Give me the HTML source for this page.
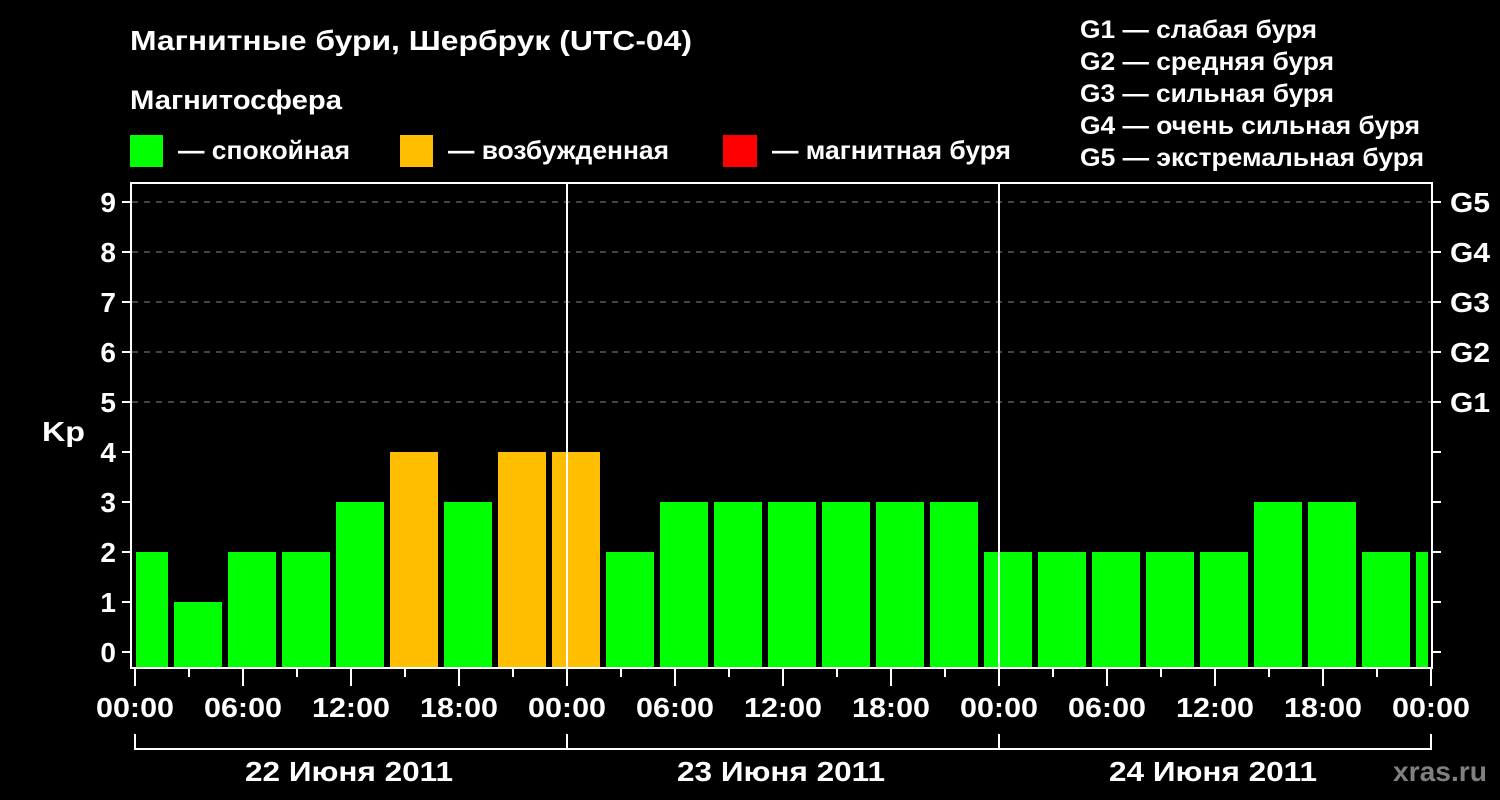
<!DOCTYPE html>
<html><head><meta charset="utf-8"><style>
html,body{margin:0;padding:0;background:#000;}
svg{display:block;}
text{font-family:"Liberation Sans",sans-serif;font-weight:bold;fill:#fff;}
</style></head><body>
<svg width="1500" height="800" viewBox="0 0 1500 800" xmlns="http://www.w3.org/2000/svg">
<rect width="1500" height="800" fill="#000"/>
<text x="130" y="50" font-size="28" textLength="562" lengthAdjust="spacingAndGlyphs">Магнитные бури, Шербрук (UTC-04)</text>
<text x="130" y="109" font-size="27" textLength="212" lengthAdjust="spacingAndGlyphs">Магнитосфера</text>
<rect x="130" y="135" width="33" height="32" fill="#00ff00"/>
<text x="178" y="159" font-size="26" textLength="172" lengthAdjust="spacingAndGlyphs">— спокойная</text>
<rect x="400" y="135" width="33" height="32" fill="#ffbf00"/>
<text x="448" y="159" font-size="26" textLength="221" lengthAdjust="spacingAndGlyphs">— возбужденная</text>
<rect x="723" y="135" width="34" height="32" fill="#ff0000"/>
<text x="772" y="159" font-size="26" textLength="239" lengthAdjust="spacingAndGlyphs">— магнитная буря</text>
<g font-size="25">
<text x="1080" y="38" textLength="237" lengthAdjust="spacingAndGlyphs">G1 — слабая буря</text>
<text x="1080" y="70" textLength="254" lengthAdjust="spacingAndGlyphs">G2 — средняя буря</text>
<text x="1080" y="102" textLength="254" lengthAdjust="spacingAndGlyphs">G3 — сильная буря</text>
<text x="1080" y="134" textLength="340" lengthAdjust="spacingAndGlyphs">G4 — очень сильная буря</text>
<text x="1080" y="166" textLength="344" lengthAdjust="spacingAndGlyphs">G5 — экстремальная буря</text>
</g>
<g stroke="#888" stroke-width="1" stroke-dasharray="6,6">
<line x1="132" y1="202" x2="1432" y2="202"/>
<line x1="132" y1="252" x2="1432" y2="252"/>
<line x1="132" y1="302" x2="1432" y2="302"/>
<line x1="132" y1="352" x2="1432" y2="352"/>
<line x1="132" y1="402" x2="1432" y2="402"/>
</g>
<g fill="#00ff00">
<rect x="136" y="552" width="32" height="116"/>
<rect x="174" y="602" width="48" height="66"/>
<rect x="228" y="552" width="48" height="116"/>
<rect x="282" y="552" width="48" height="116"/>
<rect x="336" y="502" width="48" height="166"/>
<rect x="444" y="502" width="48" height="166"/>
<rect x="606" y="552" width="48" height="116"/>
<rect x="660" y="502" width="48" height="166"/>
<rect x="714" y="502" width="48" height="166"/>
<rect x="768" y="502" width="48" height="166"/>
<rect x="822" y="502" width="48" height="166"/>
<rect x="876" y="502" width="48" height="166"/>
<rect x="930" y="502" width="48" height="166"/>
<rect x="984" y="552" width="48" height="116"/>
<rect x="1038" y="552" width="48" height="116"/>
<rect x="1092" y="552" width="48" height="116"/>
<rect x="1146" y="552" width="48" height="116"/>
<rect x="1200" y="552" width="48" height="116"/>
<rect x="1254" y="502" width="48" height="166"/>
<rect x="1308" y="502" width="48" height="166"/>
<rect x="1362" y="552" width="48" height="116"/>
<rect x="1416" y="552" width="12" height="116"/>
</g>
<g fill="#ffbf00">
<rect x="390" y="452" width="48" height="216"/>
<rect x="498" y="452" width="48" height="216"/>
<rect x="552" y="452" width="48" height="216"/>
</g>
<g stroke="#fff" stroke-width="2" fill="none">
<path d="M131 183 H1432 V668 H131 Z"/>
<line x1="567" y1="183" x2="567" y2="668"/>
<line x1="999" y1="183" x2="999" y2="668"/>
<path d="M122 202H131M122 252H131M122 302H131M122 352H131M122 402H131M122 452H131M122 502H131M122 552H131M122 602H131M122 652H131"/>
<path d="M1432 202H1441M1432 252H1441M1432 302H1441M1432 352H1441M1432 402H1441M1432 452H1441M1432 502H1441M1432 552H1441M1432 602H1441M1432 652H1441"/>
<path d="M135 668V686M189 668V677M243 668V686M297 668V677M351 668V686M405 668V677M459 668V686M513 668V677M567 668V686M621 668V677M675 668V686M729 668V677M783 668V686M837 668V677M891 668V686M945 668V677M999 668V686M1053 668V677M1107 668V686M1161 668V677M1215 668V686M1269 668V677M1323 668V686M1377 668V677M1431 668V686"/>
<path d="M135 734V749H1431V734M567 734V749M999 734V749"/>
</g>
<g font-size="28" text-anchor="end">
<text x="116" y="212">9</text><text x="116" y="262">8</text><text x="116" y="312">7</text>
<text x="116" y="362">6</text><text x="116" y="412">5</text><text x="116" y="462">4</text>
<text x="116" y="512">3</text><text x="116" y="562">2</text><text x="116" y="612">1</text>
<text x="116" y="662">0</text>
</g>
<text x="42" y="441" font-size="28" textLength="43" lengthAdjust="spacingAndGlyphs">Kp</text>
<g font-size="28">
<text x="1450" y="212" textLength="40" lengthAdjust="spacingAndGlyphs">G5</text><text x="1450" y="262" textLength="40" lengthAdjust="spacingAndGlyphs">G4</text><text x="1450" y="312" textLength="40" lengthAdjust="spacingAndGlyphs">G3</text>
<text x="1450" y="362" textLength="40" lengthAdjust="spacingAndGlyphs">G2</text><text x="1450" y="412" textLength="40" lengthAdjust="spacingAndGlyphs">G1</text>
</g>
<g font-size="28" text-anchor="middle">
<text x="135" y="717" textLength="78" lengthAdjust="spacingAndGlyphs">00:00</text><text x="243" y="717" textLength="78" lengthAdjust="spacingAndGlyphs">06:00</text><text x="351" y="717" textLength="78" lengthAdjust="spacingAndGlyphs">12:00</text><text x="459" y="717" textLength="78" lengthAdjust="spacingAndGlyphs">18:00</text>
<text x="567" y="717" textLength="78" lengthAdjust="spacingAndGlyphs">00:00</text><text x="675" y="717" textLength="78" lengthAdjust="spacingAndGlyphs">06:00</text><text x="783" y="717" textLength="78" lengthAdjust="spacingAndGlyphs">12:00</text><text x="891" y="717" textLength="78" lengthAdjust="spacingAndGlyphs">18:00</text>
<text x="999" y="717" textLength="78" lengthAdjust="spacingAndGlyphs">00:00</text><text x="1107" y="717" textLength="78" lengthAdjust="spacingAndGlyphs">06:00</text><text x="1215" y="717" textLength="78" lengthAdjust="spacingAndGlyphs">12:00</text><text x="1323" y="717" textLength="78" lengthAdjust="spacingAndGlyphs">18:00</text>
<text x="1431" y="717" textLength="78" lengthAdjust="spacingAndGlyphs">00:00</text>
<text x="349" y="781" textLength="208" lengthAdjust="spacingAndGlyphs">22 Июня 2011</text>
<text x="781" y="781" textLength="208" lengthAdjust="spacingAndGlyphs">23 Июня 2011</text>
<text x="1213" y="781" textLength="208" lengthAdjust="spacingAndGlyphs">24 Июня 2011</text>
</g>
<text x="1393" y="781" font-size="28" textLength="94" lengthAdjust="spacingAndGlyphs" style="fill:#808080">xras.ru</text>
</svg>
</body></html>
